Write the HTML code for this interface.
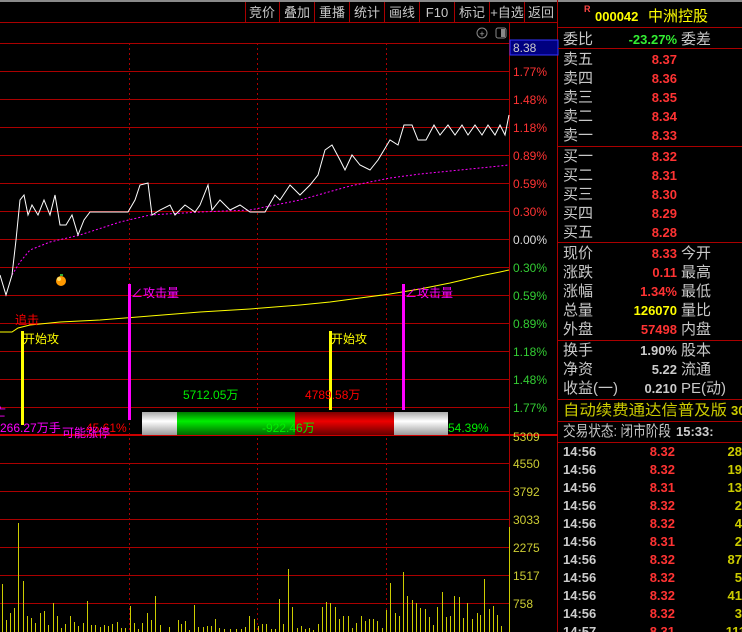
<!DOCTYPE html>
<html><head><meta charset="utf-8"><style>
html,body{margin:0;padding:0;background:#000;width:742px;height:632px;overflow:hidden}
svg{display:block}
text{font-family:"Liberation Sans","Noto Sans CJK SC",sans-serif}
.g{fill:#c8c8c8;font-size:15px}
.n{font-size:13px;font-weight:bold;text-anchor:end}
</style></head><body>
<svg width="742" height="632" viewBox="0 0 742 632" xmlns="http://www.w3.org/2000/svg">
<rect width="742" height="632" fill="#000"/>
<rect x="0" y="0" width="742" height="2" fill="#8a8a8a"/>
<g stroke="#a00" stroke-width="1">
<line x1="0" y1="22.5" x2="558" y2="22.5"/>
<line x1="245.5" y1="2" x2="245.5" y2="22"/><line x1="279.5" y1="2" x2="279.5" y2="22"/><line x1="314.5" y1="2" x2="314.5" y2="22"/><line x1="349.5" y1="2" x2="349.5" y2="22"/><line x1="384.5" y1="2" x2="384.5" y2="22"/><line x1="419.5" y1="2" x2="419.5" y2="22"/><line x1="454.5" y1="2" x2="454.5" y2="22"/><line x1="489.5" y1="2" x2="489.5" y2="22"/><line x1="524.5" y1="2" x2="524.5" y2="22"/>
</g>
<g fill="#c8c8c8" font-size="13" text-anchor="middle">
<text x="262" y="17">竞价</text><text x="297" y="17">叠加</text><text x="332" y="17">重播</text><text x="367" y="17">统计</text><text x="402" y="17">画线</text><text x="437" y="17">F10</text><text x="472" y="17">标记</text><text x="507" y="17">+自选</text><text x="541" y="17">返回</text>
</g>
<circle cx="482" cy="33" r="5" fill="none" stroke="#888"/><text x="482" y="37" font-size="9" fill="#aaa" text-anchor="middle">+</text>
<rect x="496" y="28" width="10" height="10" rx="2" fill="none" stroke="#888"/><rect x="501" y="29" width="4" height="8" fill="#888"/>
<g stroke="#a00" stroke-width="1">
<line x1="0" y1="43.5" x2="510" y2="43.5"/><line x1="0" y1="71.5" x2="510" y2="71.5"/><line x1="0" y1="99.5" x2="510" y2="99.5"/><line x1="0" y1="127.5" x2="510" y2="127.5"/><line x1="0" y1="155.5" x2="510" y2="155.5"/><line x1="0" y1="183.5" x2="510" y2="183.5"/><line x1="0" y1="211.5" x2="510" y2="211.5"/><line x1="0" y1="239.5" x2="510" y2="239.5"/><line x1="0" y1="267.5" x2="510" y2="267.5"/><line x1="0" y1="295.5" x2="510" y2="295.5"/><line x1="0" y1="323.5" x2="510" y2="323.5"/><line x1="0" y1="351.5" x2="510" y2="351.5"/><line x1="0" y1="379.5" x2="510" y2="379.5"/><line x1="0" y1="407.5" x2="510" y2="407.5"/>
<line x1="0" y1="463.5" x2="510" y2="463.5"/><line x1="0" y1="491.5" x2="510" y2="491.5"/><line x1="0" y1="519.5" x2="510" y2="519.5"/><line x1="0" y1="547.5" x2="510" y2="547.5"/><line x1="0" y1="575.5" x2="510" y2="575.5"/><line x1="0" y1="603.5" x2="510" y2="603.5"/>
<line x1="509.5" y1="22" x2="509.5" y2="527"/>
<line x1="557.5" y1="0" x2="557.5" y2="632"/>
</g>
<line x1="0" y1="435" x2="558" y2="435" stroke="#c00" stroke-width="2"/>
<line x1="509.5" y1="527" x2="509.5" y2="632" stroke="#cc0"/>
<g stroke="#a00" stroke-dasharray="2,3"><line x1="129.5" y1="43" x2="129.5" y2="632"/><line x1="257.5" y1="43" x2="257.5" y2="632"/><line x1="386.5" y1="43" x2="386.5" y2="632"/></g>
<rect x="510" y="40" width="48" height="15" fill="#000080" stroke="#33f"/>
<text x="513" y="52" font-size="12" fill="#ccc">8.38</text>
<g font-size="12">
<text x="513" y="76" fill="#f33">1.77%</text><text x="513" y="104" fill="#f33">1.48%</text><text x="513" y="132" fill="#f33">1.18%</text><text x="513" y="160" fill="#f33">0.89%</text><text x="513" y="188" fill="#f33">0.59%</text><text x="513" y="216" fill="#f33">0.30%</text><text x="513" y="244" fill="#ddd">0.00%</text>
<text x="513" y="272" fill="#3c3">0.30%</text><text x="513" y="300" fill="#3c3">0.59%</text><text x="513" y="328" fill="#3c3">0.89%</text><text x="513" y="356" fill="#3c3">1.18%</text><text x="513" y="384" fill="#3c3">1.48%</text><text x="513" y="412" fill="#3c3">1.77%</text>
<g fill="#cc3"><text x="513" y="441">5309</text><text x="513" y="468">4550</text><text x="513" y="496">3792</text><text x="513" y="524">3033</text><text x="513" y="552">2275</text><text x="513" y="580">1517</text><text x="513" y="608">758</text></g>
</g>
<polyline fill="none" stroke="#f0f" stroke-width="1" stroke-dasharray="2,2" points="12,275 20,262 30,250 50,242 80,235 120,222 150,215 200,212 250,210 300,200 350,186 390,178 420,174 460,170 490,167 509,165"/>
<polyline fill="none" stroke="#fff" stroke-width="1" points="0,275 6,295 12,275 16,240 20,200 24,195 28,215 32,205 38,215 44,200 50,215 55,195 60,225 66,225 72,215 78,235 84,220 90,212 100,212 120,212 128,212 135,200 140,185 148,183 152,215 160,210 170,205 175,215 185,205 195,212 200,205 208,185 212,210 220,200 230,210 240,205 250,212 265,212 275,195 280,200 290,185 300,195 310,185 318,175 325,150 332,145 340,160 345,170 352,155 360,165 370,170 378,160 384,150 390,140 398,145 404,125 412,125 418,140 426,140 434,125 440,135 448,125 455,135 462,125 468,135 475,125 482,135 488,125 495,135 500,125 505,135 509,115"/>
<polyline fill="none" stroke="#ff0" stroke-width="1" points="0,332 12,332 18,328 30,325 60,322 100,320 150,316 200,312 250,309 300,305 330,302 360,298 390,294 420,289 450,283 480,276 500,272 509,270"/>
<circle cx="61" cy="281" r="5" fill="#f90"/><circle cx="59" cy="279" r="2" fill="#fd6"/><rect x="60" y="274" width="3" height="2" fill="#3a3"/>
<rect x="21" y="331" width="3" height="94" fill="#ff0"/><rect x="329" y="331" width="3" height="79" fill="#ff0"/>
<rect x="128" y="284" width="3" height="136" fill="#f0f"/><rect x="402" y="284" width="3" height="126" fill="#f0f"/>
<defs>
<linearGradient id="gy" x1="0" y1="0" x2="0" y2="1"><stop offset="0" stop-color="#aaa"/><stop offset=".4" stop-color="#fff"/><stop offset="1" stop-color="#999"/></linearGradient>
<linearGradient id="gg" x1="0" y1="0" x2="0" y2="1"><stop offset="0" stop-color="#070"/><stop offset=".4" stop-color="#0e0"/><stop offset="1" stop-color="#060"/></linearGradient>
<linearGradient id="gr" x1="0" y1="0" x2="0" y2="1"><stop offset="0" stop-color="#700"/><stop offset=".4" stop-color="#e00"/><stop offset="1" stop-color="#600"/></linearGradient>
</defs>
<rect x="142" y="412" width="306" height="23" fill="url(#gy)"/>
<rect x="177" y="412" width="118" height="23" fill="url(#gg)"/>
<rect x="295" y="412" width="99" height="23" fill="url(#gr)"/>
<g font-size="12">
<text x="15" y="324" fill="#f00">追击</text>
<text x="23" y="343" fill="#ff0">开始攻</text><text x="331" y="343" fill="#ff0">开始攻</text>
<text x="131" y="297" fill="#f0f">∠攻击量</text><text x="405" y="297" fill="#f0f">∠攻击量</text>
<text x="183" y="399" fill="#0e0">5712.05万</text><text x="305" y="399" fill="#f00">4789.58万</text>
<text x="262" y="432" fill="#0e0">-922.46万</text><text x="448" y="432" fill="#0e0">54.39%</text>
<text x="0" y="432" fill="#f0f">266.27万手</text><text x="86" y="432" fill="#f00">45.61%</text><text x="62" y="437" fill="#f0f">可能涨停</text>
<text x="-6" y="416" fill="#f0f">亡</text>
</g>
<g stroke="#cc0" stroke-width="1">
<path d="M2.5 632V584M6.5 632V620M10.5 632V613M14.5 632V608M18.5 632V523M23.5 632V581M27.5 632V616M31.5 632V618M35.5 632V623M40.5 632V613M44.5 632V611M48.5 632V625M53.5 632V603M57.5 632V616M61.5 632V628M65.5 632V624M70.5 632V616M74.5 632V622M78.5 632V626M83.5 632V623M87.5 632V601M91.5 632V625M95.5 632V625M100.5 632V627M104.5 632V625M108.5 632V626M112.5 632V624M117.5 632V622M121.5 632V628M125.5 632V628M130.5 632V606M134.5 632V623M138.5 632V629M142.5 632V623M147.5 632V613M151.5 632V620M155.5 632V596M160.5 632V625M169.5 632V627M178.5 632V620M181.5 632V624M185.5 632V621M189.5 632V630M194.5 632V605M198.5 632V627M203.5 632V627M207.5 632V626M211.5 632V626M215.5 632V619M219.5 632V628M224.5 632V629M230.5 632V629M236.5 632V629M241.5 632V629M245.5 632V627M249.5 632V616M254.5 632V619M258.5 632V626M262.5 632V624M266.5 632V624M271.5 632V629M275.5 632V629M279.5 632V599M283.5 632V624M288.5 632V569M292.5 632V607M297.5 632V628M301.5 632V626M305.5 632V629M309.5 632V628M313.5 632V630M318.5 632V624M322.5 632V607M326.5 632V602M330.5 632V603M335.5 632V607M339.5 632V619M343.5 632V616M348.5 632V616M352.5 632V628M356.5 632V623M361.5 632V616M365.5 632V621M369.5 632V619M373.5 632V619M377.5 632V621M382.5 632V628M386.5 632V610M390.5 632V583M395.5 632V613M399.5 632V616M403.5 632V572M407.5 632V596M412.5 632V600M416.5 632V603M420.5 632V608M425.5 632V609M429.5 632V617M433.5 632V625M437.5 632V607M442.5 632V592M446.5 632V617M450.5 632V616M454.5 632V596M459.5 632V597M463.5 632V618M467.5 632V603M472.5 632V619M477.5 632V613M480.5 632V615M484.5 632V579M489.5 632V609M493.5 632V606M497.5 632V615M501.5 632V626"/>
</g>
<g stroke="#a00" stroke-width="1">
<line x1="558" y1="27.5" x2="742" y2="27.5"/><line x1="558" y1="48.5" x2="742" y2="48.5"/><line x1="558" y1="146.5" x2="742" y2="146.5"/><line x1="558" y1="242.5" x2="742" y2="242.5"/><line x1="558" y1="340.5" x2="742" y2="340.5"/><line x1="558" y1="399.5" x2="742" y2="399.5"/><line x1="558" y1="421.5" x2="742" y2="421.5"/><line x1="558" y1="442.5" x2="742" y2="442.5"/>
</g>
<text x="584" y="12" font-size="9" font-weight="bold" fill="#f44">R</text>
<text x="595" y="21" font-size="13" font-weight="bold" fill="#ff0">000042</text>
<text x="648" y="21" font-size="15" fill="#ff0">中洲控股</text>
<text x="563" y="44" class="g">委比</text><text x="677" y="44" class="n" fill="#3e3">-23.27%</text><text x="681" y="44" class="g">委差</text>
<g class="g"><text x="563" y="64">卖五</text><text x="563" y="83">卖四</text><text x="563" y="102">卖三</text><text x="563" y="121">卖二</text><text x="563" y="140">卖一</text>
<text x="563" y="161">买一</text><text x="563" y="180">买二</text><text x="563" y="199">买三</text><text x="563" y="218">买四</text><text x="563" y="237">买五</text></g>
<g fill="#f33"><text x="677" y="64" class="n">8.37</text><text x="677" y="83" class="n">8.36</text><text x="677" y="102" class="n">8.35</text><text x="677" y="121" class="n">8.34</text><text x="677" y="140" class="n">8.33</text>
<text x="677" y="161" class="n">8.32</text><text x="677" y="180" class="n">8.31</text><text x="677" y="199" class="n">8.30</text><text x="677" y="218" class="n">8.29</text><text x="677" y="237" class="n">8.28</text></g>
<g class="g"><text x="563" y="258">现价</text><text x="563" y="277">涨跌</text><text x="563" y="296">涨幅</text><text x="563" y="315">总量</text><text x="563" y="334">外盘</text>
<text x="681" y="258">今开</text><text x="681" y="277">最高</text><text x="681" y="296">最低</text><text x="681" y="315">量比</text><text x="681" y="334">内盘</text>
<text x="563" y="355">换手</text><text x="563" y="374">净资</text><text x="563" y="393">收益(一)</text><text x="681" y="355">股本</text><text x="681" y="374">流通</text><text x="681" y="393">PE(动)</text></g>
<text x="677" y="258" class="n" fill="#f33">8.33</text><text x="677" y="277" class="n" fill="#f33">0.11</text><text x="677" y="296" class="n" fill="#f33">1.34%</text><text x="677" y="315" class="n" fill="#ff0">126070</text><text x="677" y="334" class="n" fill="#f33">57498</text>
<text x="677" y="355" class="n" fill="#ccc">1.90%</text><text x="677" y="374" class="n" fill="#ccc">5.22</text><text x="677" y="393" class="n" fill="#ccc">0.210</text>
<text x="563" y="415" font-size="15" fill="#cc0" textLength="164" lengthAdjust="spacingAndGlyphs">自动续费通达信普及版</text><text x="731" y="415" font-size="13" font-weight="bold" fill="#cc0">30</text>
<text x="563" y="436" class="g" textLength="108" lengthAdjust="spacingAndGlyphs">交易状态: 闭市阶段</text><text x="676" y="436" font-size="13" font-weight="bold" fill="#ccc">15:33:</text>
<g font-size="13" font-weight="bold">
<g fill="#ccc"><text x="563" y="456">14:56</text><text x="563" y="474">14:56</text><text x="563" y="492">14:56</text><text x="563" y="510">14:56</text><text x="563" y="528">14:56</text><text x="563" y="546">14:56</text><text x="563" y="564">14:56</text><text x="563" y="582">14:56</text><text x="563" y="600">14:56</text><text x="563" y="618">14:56</text><text x="563" y="636">14:57</text></g>
<g fill="#f33" text-anchor="end"><text x="675" y="456">8.32</text><text x="675" y="474">8.32</text><text x="675" y="492">8.31</text><text x="675" y="510">8.32</text><text x="675" y="528">8.32</text><text x="675" y="546">8.31</text><text x="675" y="564">8.32</text><text x="675" y="582">8.32</text><text x="675" y="600">8.32</text><text x="675" y="618">8.32</text><text x="675" y="636">8.31</text></g>
<g fill="#cc0" text-anchor="end"><text x="742" y="456">28</text><text x="742" y="474">19</text><text x="742" y="492">13</text><text x="742" y="510">2</text><text x="742" y="528">4</text><text x="742" y="546">2</text><text x="742" y="564">87</text><text x="742" y="582">5</text><text x="742" y="600">41</text><text x="742" y="618">3</text><text x="746" y="636">111</text></g>
</g>
</svg>
</body></html>
